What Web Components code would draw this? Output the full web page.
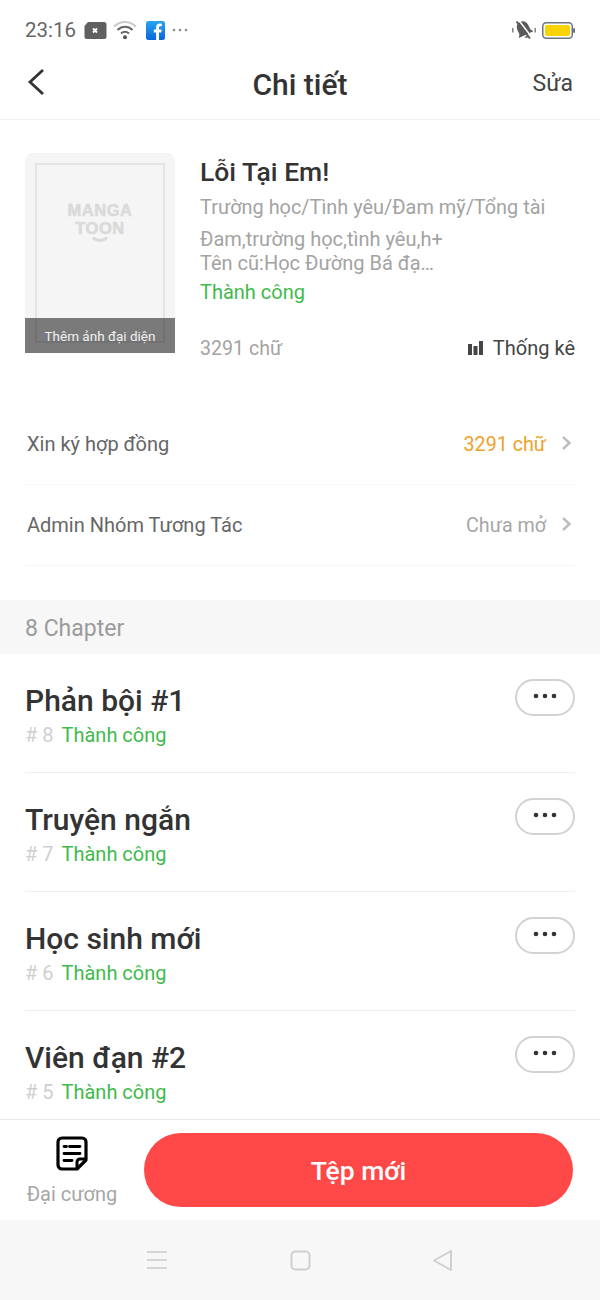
<!DOCTYPE html>
<html lang="vi"><head><meta charset="utf-8"><title>Chi tiết</title>
<style>
html,body{margin:0;padding:0;background:#fff}
body{width:600px;height:1300px;overflow:hidden;font-family:Roboto,"Noto Sans",sans-serif;color:#333}
</style></head><body>
<app-page>
  <status-bar slot="top"></status-bar>
  <nav-header slot="top" title="Chi tiết" action="Sửa"></nav-header>
  <work-summary slot="top" name="Lỗi Tại Em!" genre="Trường học/Tình yêu/Đam mỹ/Tổng tài" status="Thành công" count="3291 chữ">
    <span>Đam,trường học,tình yêu,h+</span><span>Tên cũ:Học Đường Bá đạ…</span>
  </work-summary>
  <div slot="top" style="padding-top:51px;padding-bottom:34px">
    <link-row label="Xin ký hợp đồng" value="3291 chữ" tone="#eda228"></link-row>
    <link-row label="Admin Nhóm Tương Tác" value="Chưa mở" tone="#a6a6a6"></link-row>
  </div>
  <section-head slot="top">8 Chapter</section-head>
  <chapter-row name="Phản bội #1" num="# 8"></chapter-row>
  <chapter-row name="Truyện ngắn" num="# 7"></chapter-row>
  <chapter-row name="Học sinh mới" num="# 6"></chapter-row>
  <chapter-row name="Viên đạn #2" num="# 5"></chapter-row>
  <action-bar slot="bottom"></action-bar>
  <system-nav slot="bottom"></system-nav>
</app-page>
<script>
function el(name, css, html){
  customElements.define(name, class extends HTMLElement{
    connectedCallback(){
      if(this.shadowRoot) return;
      const r=this.attachShadow({mode:'open'});
      const a=k=>this.getAttribute(k)||'';
      r.innerHTML='<style>'+css+'</style>'+html(a);
    }
  });
}
el('app-page',`:host{display:flex;flex-direction:column;width:600px;height:1300px;overflow:hidden}
.list{flex:1;min-height:0;overflow:hidden}`,()=>`<slot name="top"></slot><div class="list"><slot></slot></div><slot name="bottom"></slot>`);

el('status-bar',`:host{display:flex;align-items:center;height:60px;padding:0 25px;box-sizing:border-box;color:#666;font-size:20.500px}
.t{margin-right:8px}svg{display:block}.sp{flex:1}`,()=>`
<span class="t">23:16</span>
<svg width="23" height="17" viewBox="0 0 23 17" style="margin-right:6px"><path d="M4 0H20a2.500 2.500 0 0 1 2.500 2.500V14.500a2.500 2.500 0 0 1-2.500 2.500H3a2.500 2.500 0 0 1-2.500-2.500V4Z" fill="#606060"/><path d="M9 6.500l4 4M13 6.500l-4 4" stroke="#fff" stroke-width="2"/></svg>
<svg width="24" height="20" viewBox="0 0 24 20" style="margin-right:9px"><path d="M1 6.500C7.500 .5 16.500 .5 23 6.500" fill="none" stroke="#c9c9c9" stroke-width="2"/><path d="M4.500 10C9 5.800 15 5.800 19.500 10" fill="none" stroke="#666" stroke-width="2"/><path d="M8 13.500C10.500 11.300 13.500 11.300 16 13.500" fill="none" stroke="#666" stroke-width="2"/><circle cx="12" cy="17.300" r="2" fill="#555"/></svg>
<svg width="19" height="19" viewBox="0 0 19 19" style="margin-right:7px"><defs><linearGradient id="f" x1="0" y1="0" x2="0" y2="1"><stop offset="0" stop-color="#2aa4f4"/><stop offset="1" stop-color="#0866d8"/></linearGradient></defs><rect width="19" height="19" rx="2.500" fill="url(#f)"/><path d="M13 19V11.500H15.300L15.700 8.500H13V6.800C13 5.900 13.300 5.300 14.500 5.300H15.800V2.700C15.400 2.600 14.600 2.600 13.700 2.600 11.600 2.600 10.100 3.800 10.100 6.300V8.500H7.800V11.500H10.100V19Z" fill="#fff"/></svg>
<svg width="16" height="4" viewBox="0 0 16 4"><g fill="#8a8a8a"><circle cx="2" cy="2" r="1.300"/><circle cx="8" cy="2" r="1.300"/><circle cx="14" cy="2" r="1.300"/></g></svg>
<span class="sp"></span>
<svg width="26" height="20" viewBox="0 0 26 20" style="margin-right:5px"><g fill="#5a5a5a"><g transform="rotate(-25 13 10)"><path d="M13 1C9 1 7 4 7 8V12L5 15H21L19 12V8C19 4 17 1 13 1Z"/><path d="M10.500 16.500H15.500C15 19 11 19 10.500 16.500Z"/></g><path d="M1 8h1.500v4.500H1zM23.500 8H25v4.500h-1.500z" opacity=".75"/></g><path d="M6.500 1.500 19.500 18.500" stroke="#fff" stroke-width="1.500" transform="translate(1.500 -1)"/><path d="M5.500 1.500 19 18.500" stroke="#5a5a5a" stroke-width="2"/></svg>
<svg width="33" height="17" viewBox="0 0 33 17"><rect x=".75" y=".75" width="29.500" height="15.500" rx="3.500" fill="#fff" stroke="#6d7480" stroke-width="1.500"/><rect x="3" y="3" width="25" height="11" rx="2" fill="#fbd300"/><rect x="31" y="6" width="2" height="5" rx="1" fill="#6d7480"/></svg>`);

el('nav-header',`:host{display:flex;align-items:center;justify-content:space-between;height:59px;border-bottom:1px solid #f1f1f1;padding:0 27px;position:relative}
h1{position:absolute;left:0;right:0;top:0;margin:0;text-align:center;font:500 30px/50px Roboto,sans-serif;color:#333}
.a{font-size:23px;color:#444;position:relative;margin-top:-12px}
svg{position:relative;display:block;margin-top:-16px}`,a=>`
<svg width="18" height="28" viewBox="0 0 18 28"><path d="M16 2 3 14 16 26" fill="none" stroke="#333" stroke-width="2.800"/></svg>
<h1>${a('title')}</h1><span class="a">${a('action')}</span>`);

el('work-summary',`:host{display:flex;padding:33px 25px 0;gap:25px}
.cover{position:relative;width:150px;height:200px;box-sizing:border-box;padding:10px 10px 0;background:#f5f5f5;border-radius:7px 7px 0 0;flex:none}
.frame{height:180px;box-sizing:border-box;border:2px solid #e4e4e4;text-align:center;color:#dadada;font:900 16.500px/18px "Liberation Sans",sans-serif;padding-top:36px;letter-spacing:.5px;-webkit-text-stroke:.6px #dadada}
.frame div{height:18px}
.frame svg{display:block;margin:-1px auto 0}
.cap{position:absolute;left:0;right:0;bottom:0;height:35px;background:rgba(0,0,0,.5);color:#f0f0f0;font-size:13.500px;line-height:36px;text-align:center}
.info{flex:1;min-width:0;display:flex;flex-direction:column;height:200px;position:relative}
h2{margin:0;font:500 26.500px/38px Roboto,sans-serif;color:#333;height:38px}
.g{font-size:19.900px;line-height:30px;color:#a3a3a3;white-space:nowrap;padding-top:2px}
.d{font-size:20px;line-height:24px;color:#a3a3a3;margin-top:4px;display:flex;flex-direction:column}
::slotted(span){display:block}
.s{font-size:20px;line-height:28px;color:#3fba4c;margin-top:3px}
.b{display:flex;justify-content:space-between;align-items:center;margin-top:auto;height:30px;margin-bottom:-10px}
.c{font-size:19.600px;color:#a3a3a3}
.st{display:flex;align-items:center;gap:10px;font-size:20px;color:#444}`,a=>`
<div class="cover"><div class="frame"><div>MANGA</div><div>TOON</div><svg width="24" height="7" viewBox="0 0 24 7"><path d="M5 1.500C9 5.500 15 5.500 19 1.500" fill="none" stroke="#dadada" stroke-width="3"/></svg></div><div class="cap">Thêm ảnh đại diện</div></div>
<div class="info"><h2>${a('name')}</h2><div class="g">${a('genre')}</div><div class="d"><slot></slot></div><div class="s">${a('status')}</div>
<div class="b"><span class="c">${a('count')}</span><span class="st"><svg width="15" height="14" viewBox="0 0 15 14"><g fill="#444"><rect x="0" y="3" width="4" height="11"/><rect x="5.500" y="5" width="4" height="9"/><rect x="11" y="0" width="4" height="14"/></g></svg>Thống kê</span></div></div>`);

el('link-row',`:host{display:flex;align-items:center;height:81px;box-sizing:border-box;margin:0 25px;padding:0 3px 0 2px;border-bottom:1px solid #f6f6f6;font-size:20px;color:#666}
.l{flex:1}.v{margin-right:15px;font-size:19.700px}svg{display:block;margin-top:-3px}`,a=>`
<span class="l">${a('label')}</span><span class="v" style="color:${a('tone')}">${a('value')}</span>
<svg width="11" height="16" viewBox="0 0 11 16"><path d="M2 2 8.500 8 2 14" fill="none" stroke="#bdbdbd" stroke-width="2.400"/></svg>`);

el('section-head',`:host{display:flex;align-items:center;height:54px;box-sizing:border-box;padding:2px 25px 0;background:#f7f7f7;color:#9b9b9b;font-size:23px}`,()=>`<slot></slot>`);

el('chapter-row',`:host{display:block;position:relative;height:119px;margin:0 25px;box-sizing:border-box;border-bottom:1px solid #eee}
.n{font:500 30px/40px Roboto,sans-serif;color:#333;padding-top:27px;height:40px}
.m{display:flex;gap:8px;font-size:20px;line-height:28px}
.h{color:#cfcfcf}.s{color:#3fba4c}
.more{position:absolute;right:0;top:25px;width:60px;height:37px;box-sizing:border-box;border:2px solid #d2d2d2;border-radius:19px;display:flex;align-items:center;justify-content:center}`,a=>`
<div class="n">${a('name')}</div><div class="m"><span class="h">${a('num')}</span><span class="s">Thành công</span></div>
<div class="more"><svg width="24" height="6" viewBox="0 0 24 6" style="margin-top:-3px"><g fill="#333"><circle cx="3" cy="3" r="2.300"/><circle cx="12" cy="3" r="2.300"/><circle cx="21" cy="3" r="2.300"/></g></svg></div>`);

el('action-bar',`:host{display:flex;height:101px;box-sizing:border-box;border-top:1px solid #e9e9e9;padding:13px 27px 0 0;background:#fff}
.o{width:144px;flex:none;display:flex;flex-direction:column;align-items:center;color:#a6a6a6;font-size:20px;line-height:28px}
.o svg{display:block;margin-top:3px;margin-bottom:9px}
button{flex:1;height:74px;border:0;border-radius:37px;background:#ff4848;color:#fff;font:500 26.500px Roboto,sans-serif}`,()=>`
<div class="o"><svg width="32" height="35" viewBox="0 0 32 35"><path d="M6 2H26A4 4 0 0 1 30 6V24L21 33H6A4 4 0 0 1 2 29V6A4 4 0 0 1 6 2Z" fill="#fff" stroke="#000" stroke-width="3.200" stroke-linejoin="round"/><path d="M30 23H24A3 3 0 0 0 21 26V33" fill="none" stroke="#000" stroke-width="3" stroke-linejoin="round"/><path d="M8 10.500h2.500M13.500 10.500H24M8 17.500H24M8 24.500H16" fill="none" stroke="#000" stroke-width="2.800" stroke-linecap="round"/></svg>Đại cương</div>
<button>Tệp mới</button>`);

el('system-nav',`:host{display:flex;height:80px;background:#f7f7f7;align-items:center;justify-content:center;gap:122px}
svg{display:block}`,()=>`
<svg width="22" height="20" viewBox="0 0 22 20"><path d="M1 2H21M1 10H21M1 18H21" stroke="#d6d6d6" stroke-width="2"/></svg>
<svg width="21" height="21" viewBox="0 0 21 21"><rect x="1.500" y="1.500" width="18" height="18" rx="4" fill="none" stroke="#cfcfcf" stroke-width="2"/></svg>
<svg width="22" height="23" viewBox="0 0 22 23"><path d="M18 2V21L1 11.500Z" fill="none" stroke="#cfcfcf" stroke-width="2" stroke-linejoin="round"/></svg>`);
</script>
</body></html>
